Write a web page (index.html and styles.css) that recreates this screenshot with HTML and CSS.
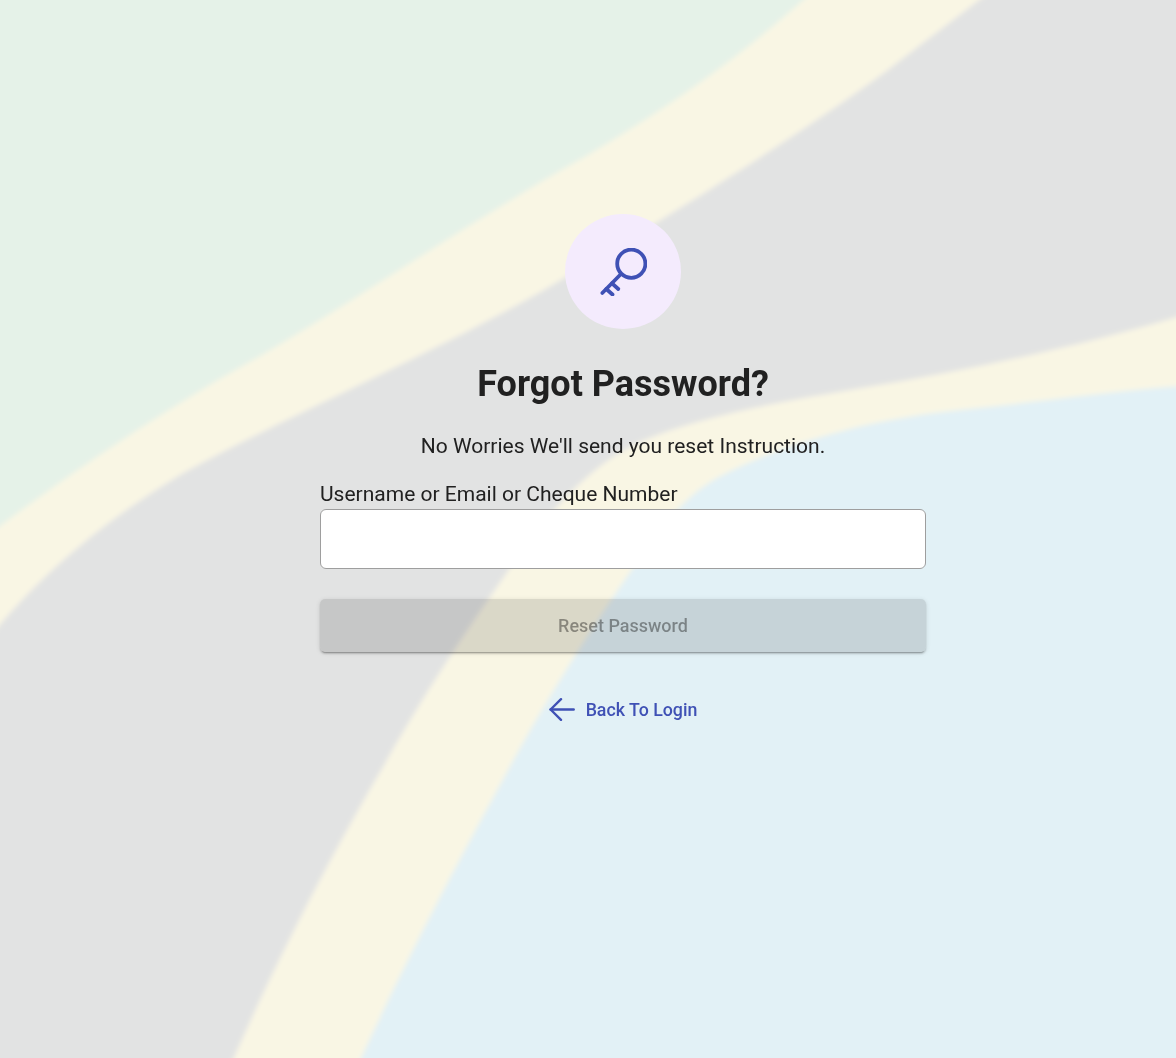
FILE: index.html
```html
<!DOCTYPE html>
<html lang="en">
<head>
  <meta charset="UTF-8" />
  <meta name="viewport" content="width=device-width, initial-scale=1.0"/>
  <title>Forgot Password</title>
  <link rel="stylesheet" href="styles.css">
</head>
<body>
  <!-- blurred map behind the form -->
  <svg class="map-bg" viewBox="0 0 1176 1058" preserveAspectRatio="none" aria-hidden="true">
    <defs>
      <filter id="soft" x="-5%" y="-5%" width="110%" height="110%">
        <feGaussianBlur stdDeviation="2.5"/>
      </filter>
    </defs>
    <g filter="url(#soft)">
      <rect x="-20" y="-20" width="1216" height="1098" fill="#e2e3e3"/>
      <path d="M-20 650 C40 570 120 510 187 471 C290 415 430 355 544 290 C660 222 800 135 888 70 C920 45 960 15 1005 -20 L-20 -20 Z" fill="#f9f6e4"/>
      <path d="M-20 541 C80 465 180 400 262 355 C380 285 480 215 588 155 C660 112 740 60 825 -20 L-20 -20 Z" fill="#e5f2e8"/>
      <path d="M1196 311 C1110 338 1000 365 850 390 C760 405 690 420 640 442 C590 465 550 510 510 568 C470 625 420 700 383 767 C340 840 280 950 225 1078 L1196 1078 Z" fill="#f9f6e4"/>
      <path d="M1196 385 C1120 390 1040 402 960 410 C880 418 790 440 719 477 C690 492 660 525 633 568 C600 615 545 700 500 785 C470 840 410 950 352 1078 L1196 1078 Z" fill="#e2f1f6"/>
    </g>
  </svg>

  <div class="reset-container">
    <div class="reset-box">
      <div class="icon-circle">
        <svg class="key-icon" viewBox="0 0 48 48" fill="none" stroke="#3f51b5" stroke-width="3.8" stroke-linecap="round" stroke-linejoin="round">
          <circle cx="32.3" cy="15.7" r="14.1"/>
          <path d="M21.5 26.5 L3.3 45"/>
          <path d="M7.3 41 L13.5 46.5"/>
          <path d="M13 35.3 L19.3 41"/>
        </svg>
      </div>
      <h2>Forgot Password?</h2>
      <p class="reset-text">No Worries We'll send you reset Instruction.</p>
      <form class="reset-form">
        <label for="username">Username or Email or Cheque Number</label>
        <input type="text" id="username" />
        <button type="button" class="submit-btn" disabled>Reset Password</button>
      </form>
      <a class="back-link" href="#">
        <svg class="back-icon" viewBox="0 0 26 23" fill="none" stroke="#3f51b5" stroke-width="2.4" stroke-linecap="round" stroke-linejoin="round">
          <path d="M24.7 11.5 H1.6"/>
          <path d="M12 1.2 L1.6 11.5 L12 21.8"/>
        </svg>
        <span>Back To Login</span>
      </a>
    </div>
  </div>
</body>
</html>
```

FILE: styles.css
```css
body {
  margin: 0;
  font-family: Roboto, sans-serif;
  color: #212121;
  background-color: #e2e3e3;
}

.map-bg {
  position: fixed;
  top: 0;
  left: 0;
  width: 100%;
  height: 100%;
}

.reset-container {
  position: relative;
  display: flex;
  justify-content: center;
  height: 100vh;
  padding: 214px 0 0 70px;
  box-sizing: border-box;
}

.reset-box {
  display: flex;
  flex-direction: column;
  align-items: center;
  width: 606px;
}

.icon-circle {
  display: flex;
  justify-content: center;
  align-items: center;
  width: 116px;
  height: 115px;
  border-radius: 50%;
  background: #f4ebfd;
}

.key-icon {
  width: 48px;
  height: 48px;
}

.reset-box h2 {
  font-size: 36px;
  font-weight: 700;
  line-height: 40px;
  margin: 35px 0 0;
}

.reset-text {
  font-size: 21px;
  line-height: 24px;
  margin: 30px 0 0;
}

.reset-form {
  width: 100%;
  margin-top: 24px;
}

.reset-form label {
  display: block;
  font-size: 21px;
  line-height: 24px;
  margin-bottom: 3px;
}

.reset-form input {
  display: block;
  width: 100%;
  height: 60px;
  box-sizing: border-box;
  border: 1px solid #9e9e9e;
  border-radius: 6px;
  background: #fff;
}

.submit-btn {
  display: block;
  width: 100%;
  height: 53px;
  margin-top: 30px;
  border: none;
  border-radius: 5px;
  font-family: Roboto, sans-serif;
  font-size: 18px;
  font-weight: 500;
  color: rgba(0, 0, 0, 0.38);
  background: rgba(0, 0, 0, 0.12);
  box-shadow: 0 3px 1px -2px rgba(0, 0, 0, 0.2), 0 2px 2px 0 rgba(0, 0, 0, 0.14), 0 1px 5px 0 rgba(0, 0, 0, 0.12);
}

.back-link {
  display: flex;
  align-items: center;
  gap: 11px;
  margin-top: 46px;
  font-size: 17.8px;
  font-weight: 500;
  line-height: 23px;
  color: #3f51b5;
  text-decoration: none;
}

.back-icon {
  width: 26px;
  height: 23px;
}
```
